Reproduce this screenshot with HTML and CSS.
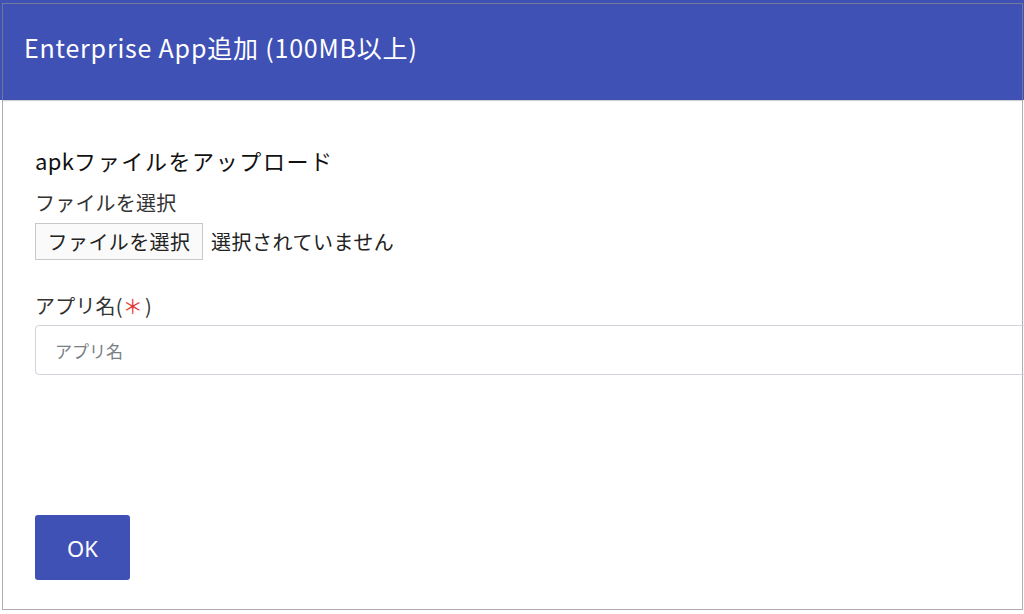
FILE: index.html
```html
<!DOCTYPE html>
<html lang="ja">
<head>
<meta charset="utf-8">
<link rel="stylesheet" href="styles.css">
</head>
<body>
<div class="frame">
  <header class="header">
    <h1 class="title">Enterprise App追加 (100MB以上)</h1>
  </header>
  <main class="content">
    <h2 class="heading"><span class="latin">apk</span>ファイルをアップロード</h2>
    <div class="label">ファイルを選択</div>
    <div class="file-row">
      <span class="file-btn">ファイルを選択</span>
      <span class="file-status">選択されていません</span>
    </div>
    <div class="label name-label">アプリ名(<span class="req">＊</span>)</div>
    <div class="input"><span class="placeholder">アプリ名</span></div>
    <div class="actions">
      <span class="ok-btn">OK</span>
    </div>
  </main>
</div>
</body>
</html>
```

FILE: styles.css
```css
html, body {
  margin: 0;
  padding: 0;
  width: 1024px;
  height: 614px;
  overflow: hidden;
}
body {
  background: linear-gradient(#3f51b5 0, #3f51b5 100px, #ffffff 100px);
  font-family: "Noto Sans CJK JP", "Noto Sans", sans-serif;
  color: #222;
}
.frame {
  margin: 3px 1px 0 2px;
  height: 605px;
  border: 1px solid rgba(140, 140, 140, 0.7);
  display: flex;
  flex-direction: column;
}
.header {
  box-sizing: border-box;
  height: 96px;
  display: flex;
  align-items: center;
  padding: 0 0 9px 21px;
  box-shadow: 0 1px 1px rgba(0, 0, 0, 0.18);
}
.title {
  margin: 0;
  font-weight: 400;
  font-size: 25px;
  letter-spacing: 0.8px;
  color: #fff;
  line-height: 1;
}
.content {
  padding: 46px 0 0 32px;
  display: flex;
  flex-direction: column;
}
.heading {
  margin: 0;
  font-weight: 400;
  font-size: 22px;
  letter-spacing: 1.6px;
  line-height: 28px;
  color: #111;
}
.latin {
  letter-spacing: 0.3px;
}
.label {
  font-size: 20px;
  letter-spacing: 0.2px;
  line-height: 26px;
  margin-top: 16px;
  color: #333;
}
.file-row {
  display: flex;
  align-items: center;
  margin-top: 7px;
  gap: 8px;
}
.file-btn {
  box-sizing: border-box;
  height: 37px;
  width: 168px;
  border: 1px solid #c8c8c8;
  background: #fafafa;
  display: flex;
  align-items: center;
  justify-content: center;
  font-size: 20px;
  letter-spacing: 0.4px;
  color: #222;
}
.file-status {
  font-size: 20px;
  letter-spacing: 0.5px;
  color: #222;
}
.name-label {
  margin-top: 33px;
}
.req {
  color: #e53935;
  margin-right: 2px;
}
.input {
  box-sizing: border-box;
  margin-top: 6px;
  width: 1010px;
  height: 50px;
  border: 1px solid #ced4da;
  border-radius: 4px;
  display: flex;
  align-items: center;
  padding-left: 19px;
}
.placeholder {
  font-size: 17px;
  color: #7a7f85;
}
.actions {
  margin-top: 140px;
}
.ok-btn {
  box-sizing: border-box;
  width: 95px;
  height: 65px;
  background: #3f51b5;
  border-radius: 3px;
  color: #fff;
  display: flex;
  align-items: center;
  justify-content: center;
  font-family: "Noto Sans", sans-serif;
  font-size: 22px;
}
```
